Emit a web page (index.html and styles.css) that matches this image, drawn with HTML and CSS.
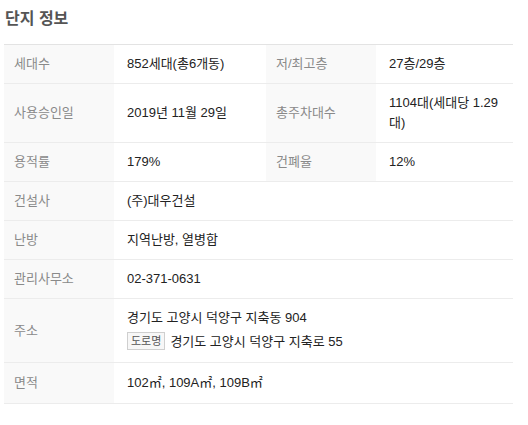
FILE: index.html
```html
<!DOCTYPE html>
<html lang="ko">
<head>
<meta charset="utf-8">
<link rel="stylesheet" href="styles.css">
</head>
<body>
<section class="panel">
  <h2 class="title">단지 정보</h2>
  <table class="info">
    <colgroup>
      <col class="c-label"><col class="c-val1"><col class="c-label"><col class="c-val2">
    </colgroup>
    <tbody>
      <tr>
        <th>세대수</th><td>852세대(총6개동)</td>
        <th>저/최고층</th><td>27층/29층</td>
      </tr>
      <tr>
        <th>사용승인일</th><td>2019년 11월 29일</td>
        <th>총주차대수</th><td>1104대(세대당 1.29대)</td>
      </tr>
      <tr>
        <th>용적률</th><td>179%</td>
        <th>건폐율</th><td>12%</td>
      </tr>
      <tr>
        <th>건설사</th><td colspan="3">(주)대우건설</td>
      </tr>
      <tr>
        <th>난방</th><td colspan="3">지역난방, 열병합</td>
      </tr>
      <tr>
        <th>관리사무소</th><td colspan="3">02-371-0631</td>
      </tr>
      <tr class="addr">
        <th>주소</th>
        <td colspan="3">
          <div>경기도 고양시 덕양구 지축동 904</div>
          <div class="road"><span class="badge">도로명</span>경기도 고양시 덕양구 지축로 55</div>
        </td>
      </tr>
      <tr class="area">
        <th>면적</th><td colspan="3">102㎡, 109A㎡, 109B㎡</td>
      </tr>
    </tbody>
  </table>
</section>
</body>
</html>
```
FILE: styles.css
```css
html, body {
  margin: 0;
  padding: 0;
  background: #fff;
}
body {
  font-family: "Liberation Sans", "Noto Sans CJK KR", sans-serif;
  color: #222;
}
.panel {
  padding: 9px 15px 0 4px;
}
.title {
  margin: 0 0 0 1px;
  font-size: 16px;
  line-height: 20px;
  font-weight: 700;
  color: #555;
  height: 35px;
}
.info {
  width: 509px;
  border-collapse: collapse;
  table-layout: fixed;
  border-top: 1px solid #e3e3e3;
  font-size: 13px;
}
.c-label { width: 110px; }
.c-val1 { width: 152px; }
.c-val2 { width: 137px; }
.info th,
.info td {
  padding: 9px 13px 9px 13px;
  line-height: 20px;
  border-bottom: 1px solid #ececec;
  text-align: left;
  vertical-align: middle;
}
.info th {
  background: #f9f9f9;
  color: #8a8a8a;
  font-weight: 400;
  padding-left: 10px;
}
.info td {
  color: #222;
}
.road {
  margin-top: 3px;
  line-height: 22px;
}
.badge {
  display: inline-block;
  font-size: 11px;
  line-height: 14px;
  padding: 1px 3px;
  border: 1px solid #cfcfcf;
  background: #f7f7f7;
  color: #555;
  margin-right: 5px;
  vertical-align: 1px;
}
.area td, .area th {
  padding-top: 10px;
  padding-bottom: 10px;
}
```
